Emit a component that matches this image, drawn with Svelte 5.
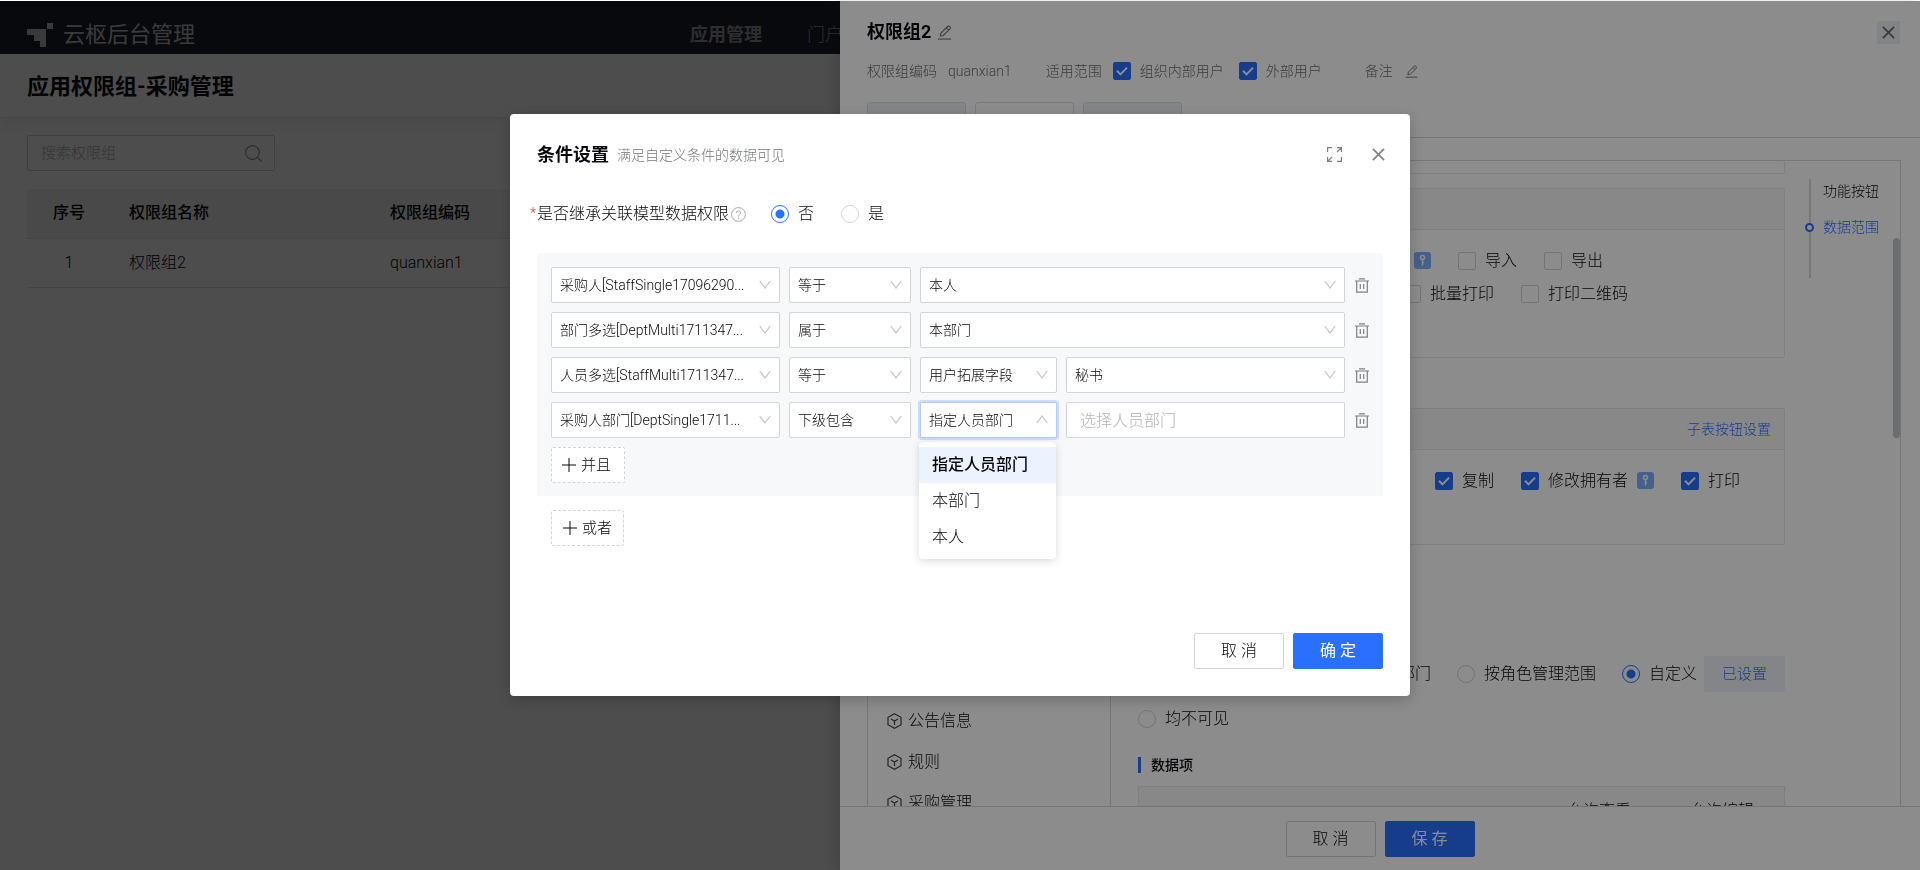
<script>
  const fieldRows = [
    { id: 'r1', field: '采购人[StaffSingle17096290...', op: '等于', value: '本人' },
    { id: 'r2', field: '部门多选[DeptMulti1711347...', op: '属于', value: '本部门' },
    { id: 'r3', field: '人员多选[StaffMulti1711347...', op: '等于', kind: '用户拓展字段', value: '秘书' },
    { id: 'r4', field: '采购人部门[DeptSingle1711...', op: '下级包含', kind: '指定人员部门', open: true, placeholder: '选择人员部门' }
  ];
  const menu = ['指定人员部门', '本部门', '本人'];
  const tree = ['公告信息', '规则', '采购管理'];
</script>

{#snippet edit(size)}
  <svg class="edit" width={size} height={size} viewBox="0 0 16 16" fill="none" stroke="currentColor" stroke-width="1.2" aria-hidden="true">
    <path d="M1 15h14" /><path d="M3.5 11.8 4.2 8.700 11.300 1.600a1.400 1.400 0 0 1 2 0l.5.5a1.400 1.400 0 0 1 0 2L6.700 11.200z" /><path d="m10 3 2.500 2.500" />
  </svg>
{/snippet}

{#snippet cross(size)}
  <svg width={size} height={size} viewBox="0 0 14 14" fill="none" stroke="currentColor" stroke-width="1.8" aria-hidden="true"><path d="M1 1l12 12M13 1 1 13" /></svg>
{/snippet}

{#snippet key()}
  <svg class="key" width="17" height="17" viewBox="0 0 17 17" aria-hidden="true">
    <rect width="17" height="17" rx="3" fill="#7fb0ff" />
    <circle cx="8.500" cy="5.500" r="2" fill="none" stroke="#fff" stroke-width="1.500" /><path d="M8.500 7.500v6M8.500 10.500h1.500" stroke="#fff" stroke-width="1.500" fill="none" />
  </svg>
{/snippet}

{#snippet select(label, value, open)}
  <span class="select" class:open>
    <select aria-label={label}><option>{value}</option></select>
    <svg width="12" height="9" viewBox="0 0 12 9" fill="none" stroke="#bfc2c6" stroke-width="1.200" aria-hidden="true">
      {#if open}<path d="M.8 8 6 1l5.200 7" />{:else}<path d="M.8 1 6 8l5.200-7" />{/if}
    </svg>
  </span>
{/snippet}

<div class="page">
  <header class="topbar">
    <div class="brand">
      <svg width="26" height="24" viewBox="0 0 26 24" fill="currentColor" aria-hidden="true"><path d="M20 0h6v6h-6zM0 6h19v18h-6v-6H7v-6H0z" /></svg>
      <span>云枢后台管理</span>
    </div>
    <nav><a class="current" href="#apps">应用管理</a><a href="#portal">门户</a></nav>
  </header>
  <div class="heading"><h1>应用权限组-采购管理</h1></div>
  <main class="list">
    <div class="search">
      <input type="text" aria-label="搜索权限组" placeholder="搜索权限组" />
      <svg width="17" height="17" viewBox="0 0 17 17" fill="none" stroke="currentColor" stroke-width="1.200" aria-hidden="true"><circle cx="7.500" cy="7.500" r="6.800" /><path d="m12.500 12.500 4 4" /></svg>
    </div>
    <table>
      <thead><tr><th class="no">序号</th><th class="name">权限组名称</th><th>权限组编码</th></tr></thead>
      <tbody><tr><td class="no">1</td><td>权限组2</td><td>quanxian1</td></tr></tbody>
    </table>
  </main>
</div>

<div class="mask"></div>

<aside class="drawer">
  <header class="drawer-head">
    <div class="drawer-title">
      <h2>权限组2</h2>{@render edit(15)}
      <button class="close" aria-label="关闭">{@render cross(13)}</button>
    </div>
    <div class="meta">
      <span>权限组编码</span><span class="code">quanxian1</span>
      <span class="scope">适用范围</span>
      <label class="inner"><input type="checkbox" checked />组织内部用户</label>
      <label class="outer"><input type="checkbox" checked />外部用户</label>
      <span class="remark">备注</span>{@render edit(13)}
    </div>
    <div class="tabs"><i></i><i class="on"></i><i></i></div>
  </header>

  <div class="drawer-body">
    <div class="frame">
      <ul class="tree">
        {#each tree as name}
          <li>
            <svg width="15" height="16" viewBox="0 0 15 16" fill="none" stroke="currentColor" stroke-width="1.200" aria-hidden="true"><path d="M7.500.8 14 4.300v7.400l-6.500 3.500L1 11.700V4.300z" /><path d="M4 6l3.500 2L11 6M7.500 8v4" /></svg>
            {name}
          </li>
        {/each}
      </ul>
      <div class="settings">
        <section class="card stub"></section>
        <section class="card first">
          <div class="card-head"></div>
          <div class="checks">
            <div class="line">{@render key()}
              <label><input type="checkbox" />导入</label>
              <label class="last-a"><input type="checkbox" />导出</label>
            </div>
            <div class="line">
              <label><input type="checkbox" />批量打印</label>
              <label class="last-b"><input type="checkbox" />打印二维码</label>
            </div>
          </div>
        </section>
        <section class="card third">
          <div class="card-head"><a href="#sub">子表按钮设置</a></div>
          <div class="checks">
            <div class="line">
              <label><input type="checkbox" checked />复制</label>
              <label><input type="checkbox" checked />修改拥有者</label>{@render key()}
              <label class="last-c"><input type="checkbox" checked />打印</label>
            </div>
          </div>
        </section>
        <div class="ranges">
          <span>部门</span>
          <label><input type="radio" name="range" />按角色管理范围</label>
          <label><input type="radio" name="range" checked />自定义</label>
          <button class="soft">已设置</button>
        </div>
        <div class="ranges none"><label><input type="radio" name="range" />均不可见</label></div>
        <h3>数据项</h3>
        <div class="grid-head"><span>允许查看</span><span>允许编辑</span></div>
      </div>
      <nav class="anchors">
        <a href="#buttons">功能按钮</a>
        <a class="current" href="#scope">数据范围</a>
      </nav>
      <div class="thumb"></div>
    </div>
  </div>
  <footer class="drawer-foot"><button class="btn">取 消</button><button class="btn primary">保 存</button></footer>
</aside>

<div class="mask over">
  <div class="dialog" role="dialog" aria-labelledby="dlg">
    <header>
      <h2 id="dlg">条件设置</h2><small>满足自定义条件的数据可见</small>
      <button class="icon expand" aria-label="全屏">
        <svg width="15" height="15" viewBox="0 0 15 15" fill="none" stroke="currentColor" stroke-width="1.200" aria-hidden="true"><path d="M.6 5V.6H5M10 .6h4.400V5M14.400.6 10 5M14.400 10v4.400H10M5 14.400H.6V10M.6 14.400 5 10" /></svg>
      </button>
      <button class="icon" aria-label="关闭">{@render cross(13)}</button>
    </header>
    <div class="inherit">
      <em>*</em><span>是否继承关联模型数据权限</span>
      <svg width="15" height="15" viewBox="0 0 15 15" fill="none" stroke="#a3a5a8" aria-hidden="true"><circle cx="7.500" cy="7.500" r="6.900" /><path d="M5.400 6a2.100 2.100 0 1 1 3 1.900c-.7.4-.9.700-.9 1.400M7.500 10.500v1.200" /></svg>
      <label><input type="radio" name="inherit" checked />否</label>
      <label><input type="radio" name="inherit" />是</label>
    </div>
    <div class="group">
      {#each fieldRows as row (row.id)}
        <div class="row">
          <div class="f">{@render select('字段', row.field)}</div>
          <div class="o">{@render select('条件', row.op)}</div>
          {#if row.kind}
            <div class="k">
              {@render select('类型', row.kind, row.open)}
              {#if row.open}
                <ul class="menu" role="listbox">
                  {#each menu as item, i}<li role="option" aria-selected={i === 0}>{item}</li>{/each}
                </ul>
              {/if}
            </div>
          {/if}
          <div class="v">
            {#if row.placeholder}
              <input type="text" aria-label={row.placeholder} placeholder={row.placeholder} />
            {:else}
              {@render select('值', row.value)}
            {/if}
          </div>
          <button class="icon trash" aria-label="删除">
            <svg width="14" height="15" viewBox="0 0 14 15" fill="none" stroke="currentColor" stroke-width="1.200" aria-hidden="true"><path d="M0 3h14M4 .8h6M1.700 3v11.200h10.600V3M5.300 6v5M8.700 6v5" /></svg>
          </button>
        </div>
      {/each}
      <button class="add and"><svg width="14" height="14" viewBox="0 0 14 14" stroke="currentColor" aria-hidden="true"><path d="M7 0v14M0 7h14" /></svg>并且</button>
    </div>
    <button class="add or"><svg width="14" height="14" viewBox="0 0 14 14" stroke="currentColor" aria-hidden="true"><path d="M7 0v14M0 7h14" /></svg>或者</button>
    <footer><button class="btn">取 消</button><button class="btn primary">确 定</button></footer>
  </div>
</div>

<style>
  :global(body) { background: #fff; overflow: hidden; }
  .page, .drawer, .dialog {
    font-family: Roboto, "Noto Sans CJK SC", sans-serif;
    font-size: 16px;
    line-height: 24px;
    font-weight: 300;
    color: #08090e;
  }
  *, *::before { box-sizing: border-box; }
  h1, h2, h3, ul { margin: 0; padding: 0; list-style: none; }
  button, input, select { font: inherit; color: inherit; margin: 0; }
  button { cursor: pointer; }
  a { text-decoration: none; color: inherit; }
  svg { flex: none; display: block; }
  label { display: flex; align-items: center; gap: 9px; white-space: nowrap; }

  input[type='checkbox'], input[type='radio'] {
    appearance: none;
    flex: none;
    width: 18px;
    height: 18px;
    border: 1px solid #d2d4d8;
    border-radius: 2px;
    background: #fff;
  }
  input[type='checkbox']:checked {
    border-color: #2970ff;
    background: #2970ff url("data:image/svg+xml,%3Csvg xmlns='http://www.w3.org/2000/svg' viewBox='0 0 18 18' fill='none' stroke='white' stroke-width='2'%3E%3Cpath d='M4 8.800l3.500 3.600L14 5.600'/%3E%3C/svg%3E") center / 18px;
  }
  input[type='radio'] { border-radius: 50%; }
  input[type='radio']:checked {
    border-color: #2970ff;
    background: radial-gradient(circle, #2970ff 4px, #fff 5px);
  }

  .page { position: fixed; inset: 1px 0 0; background: #fff; }
  .topbar { display: flex; align-items: flex-end; height: 53px; padding: 0 27px; background: #1d222c; color: #c4c4c4; }
  .brand { flex: 1; display: flex; align-items: center; gap: 10px; height: 39px; font-size: 22px; font-weight: 400; }
  .topbar nav { flex: 0 0 1203px; display: flex; gap: 45px; height: 38px; align-items: center; font-size: 18px; color: #999; }
  .topbar .current { font-weight: 700; }
  .heading { height: 64px; padding: 17px 27px; border-bottom: 1px solid #e9ebee; box-shadow: 0 4px 12px rgba(30, 50, 60, .08); }
  h1 { font-size: 22px; line-height: 32px; font-weight: 700; }
  .list { padding: 17px 27px; }
  .search { display: flex; align-items: center; width: 248px; height: 36px; padding: 0 12px 0 13px; border: 1px solid #d2d4d8; border-radius: 2px; color: #9a9a9a; font-size: 15px; }
  .search input { flex: 1; min-width: 0; border: 0; padding: 0; outline: 0; background: none; }
  input::placeholder { color: #b0b2b5; opacity: 1; }
  table { width: 100%; margin-top: 18px; border-collapse: collapse; table-layout: fixed; }
  th, td { height: 49px; padding: 0 18px; text-align: left; border-bottom: 1px solid #e2e4e8; }
  th { background: #f4f5f7; font-weight: 500; }
  .no { width: 84px; text-align: center; }
  .name { width: 261px; }

  .mask { position: fixed; inset: 1px 0 0; background: rgba(0, 0, 0, .45); }
  .drawer { position: fixed; inset: 1px 0 0 auto; width: 56.25%; display: flex; flex-direction: column; background: #fff; box-shadow: -4px 0 12px rgba(0, 0, 0, .15); }
  .drawer-head { padding: 17px 20px 0 27px; border-bottom: 1px solid #d5d7db; height: 137px; }
  .drawer-title { display: flex; align-items: center; gap: 6px; height: 28px; }
  .drawer-title h2 { font-size: 18px; font-weight: 700; }
  .edit { color: #777; }
  .close { display: grid; place-items: center; width: 23px; height: 23px; margin-left: auto; padding: 0; border: 0; background: #eceff5; color: #666; }
  .meta { display: flex; align-items: center; height: 24px; margin-top: 13px; font-size: 14px; color: #6c6e72; }
  .code { margin-left: 11px; }
  .scope { margin: 0 11px 0 34px; }
  .inner { margin-right: 15px; }
  .remark { margin: 0 12px 0 43px; }
  .tabs { display: flex; gap: 9px; margin-top: 19px; }
  .tabs i { width: 99px; height: 35px; border: 1px solid #dcdfe4; border-bottom: 0; border-radius: 4px 4px 0 0; background: #f0f3f7; }
  .tabs .on { background: #fff; }

  .drawer-body { flex: 1; min-height: 0; padding: 22px 19px 0 27px; overflow: hidden; }
  .frame { position: relative; display: flex; height: 100%; border: 1px solid #d5d7db; border-bottom: 0; overflow: hidden; }
  .tree { flex: 0 0 243px; padding: 539px 0 0 19px; border-right: 1px solid #d5d7db; }
  .tree li { display: flex; align-items: center; gap: 6px; height: 41px; }
  .tree svg { color: #444; }
  .settings { flex: 1; padding-left: 27px; }
  .card { border: 1px solid #e6e8eb; border-radius: 2px; }
  .stub { height: 13px; border-top: 0; }
  .first { height: 170px; margin-top: 14px; }
  .third { height: 137px; margin-top: 50px; }
  .card-head { display: flex; align-items: center; justify-content: flex-end; height: 41px; padding-right: 13px; background: #f8f8f9; border-bottom: 1px solid #e6e8eb; font-size: 14px; }
  .card-head a { color: #2970ff; }
  .checks { padding: 14px 0; }
  .line { display: flex; justify-content: flex-end; align-items: center; gap: 27px; height: 33px; }
  .line .key { margin-left: -18px; }
  .last-a { margin-right: 181px; }
  .last-b { margin-right: 156px; }
  .last-c { margin-right: 44px; }
  .ranges { display: flex; align-items: center; justify-content: flex-end; gap: 26px; height: 36px; margin-top: 111px; }
  .ranges.none { justify-content: flex-start; margin-top: 9px; }
  .soft { width: 81px; height: 36px; margin-left: -19px; border: 0; border-radius: 2px; background: #eff2f7; color: #2970ff; font-size: 15px; }
  h3 { margin-top: 20px; padding-left: 10px; border-left: 3px solid #2970ff; font-size: 14px; line-height: 16px; font-weight: 500; }
  .grid-head { display: flex; justify-content: flex-end; gap: 59px; margin-top: 13px; padding: 12px 30px 12px 0; border: 1px solid #e6e8eb; background: #f8f8f9; }
  .anchors { flex: 0 0 115px; height: 99px; margin-top: 18px; padding-left: 24px; font-size: 14px; display: flex; flex-direction: column; gap: 12px; background: linear-gradient(#d8dadd, #d8dadd) 24px 0 / 2px 100% no-repeat; }
  .anchors a { padding-left: 14px; }
  .anchors .current { position: relative; color: #2970ff; }
  .anchors .current::before { content: ''; position: absolute; left: -4px; top: 8px; width: 9px; height: 9px; border: 2px solid #2970ff; border-radius: 50%; background: #fff; }
  .thumb { position: absolute; right: 0; top: 77px; width: 7px; height: 200px; border-radius: 4px; background: #c4c6c8; }
  .drawer-foot { display: flex; justify-content: center; gap: 9px; height: 64px; padding-top: 14px; border-top: 1px solid #d5d7db; }

  .btn { width: 90px; height: 36px; padding: 0; border: 1px solid #d2d4d8; border-radius: 2px; background: #fff; }
  .primary { border-color: #2970ff; background: #2970ff; color: #fff; font-weight: 400; }

  .over { display: flex; justify-content: center; align-items: flex-start; padding-top: 113px; }
  .dialog { width: 900px; max-width: 100%; padding: 27px; border-radius: 4px; background: #fff; box-shadow: 0 4px 14px rgba(0, 0, 0, .2); }
  .dialog header { display: flex; align-items: center; height: 27px; margin-right: -2px; }
  .dialog h2 { font-size: 18px; font-weight: 700; }
  small { flex: 1; margin-left: 8px; font-size: 14px; color: #75777a; }
  .icon { display: grid; place-items: center; padding: 0; border: 0; background: none; color: #7d7f83; }
  .expand { margin-right: 30px; }
  .inherit { position: relative; display: flex; align-items: center; height: 24px; margin-top: 34px; }
  .inherit em { position: absolute; left: -7px; top: -1px; font-style: normal; font-size: 14px; color: #f04134; }
  .inherit svg { margin: 0 25px 0 2px; }
  .inherit label + label { margin-left: 27px; }
  .group { display: grid; gap: 9px; margin-top: 27px; padding: 14px 14px 13px; border-radius: 2px; background: #f6f8fa; }
  .row { display: flex; gap: 9px; font-size: 14px; }
  .f { flex: 0 0 229px; }
  .o { flex: 0 0 122px; }
  .k { position: relative; flex: 0 0 137px; }
  .v { flex: 1; }
  .select { position: relative; display: block; }
  .select select, .v input { display: block; width: 100%; height: 36px; padding: 0 28px 0 8px; border: 1px solid #d2d4d8; border-radius: 2px; background: #fff; appearance: none; outline: 0; }
  .v input { padding: 0 13px; font-size: 16px; }
  .select svg { position: absolute; right: 9px; top: 13px; pointer-events: none; }
  .open select { border-color: #b5c9f5; box-shadow: 0 0 0 2px #cbdcff; }
  .trash { width: 15px; }
  .menu { position: absolute; z-index: 2; left: -1px; top: 40px; width: 137px; padding: 5px 0 4px; border-radius: 4px; background: #fff; font-size: 16px; line-height: 36px; box-shadow: 0 2px 9px rgba(0, 0, 0, .15); }
  .menu li { padding: 0 13px; }
  .menu li[aria-selected='true'] { background: #ebf3ff; font-weight: 500; }
  .add { display: flex; align-items: center; gap: 5px; height: 36px; padding: 0 13px 0 10px; border: 1px dashed #d2d4d8; border-radius: 2px; background: #fff; font-size: 15px; justify-self: start; }
  .or { margin: 14px 0 0 14px; padding: 0 11px; }
  .dialog footer { display: flex; justify-content: flex-end; gap: 9px; margin-top: 87px; }
</style>
